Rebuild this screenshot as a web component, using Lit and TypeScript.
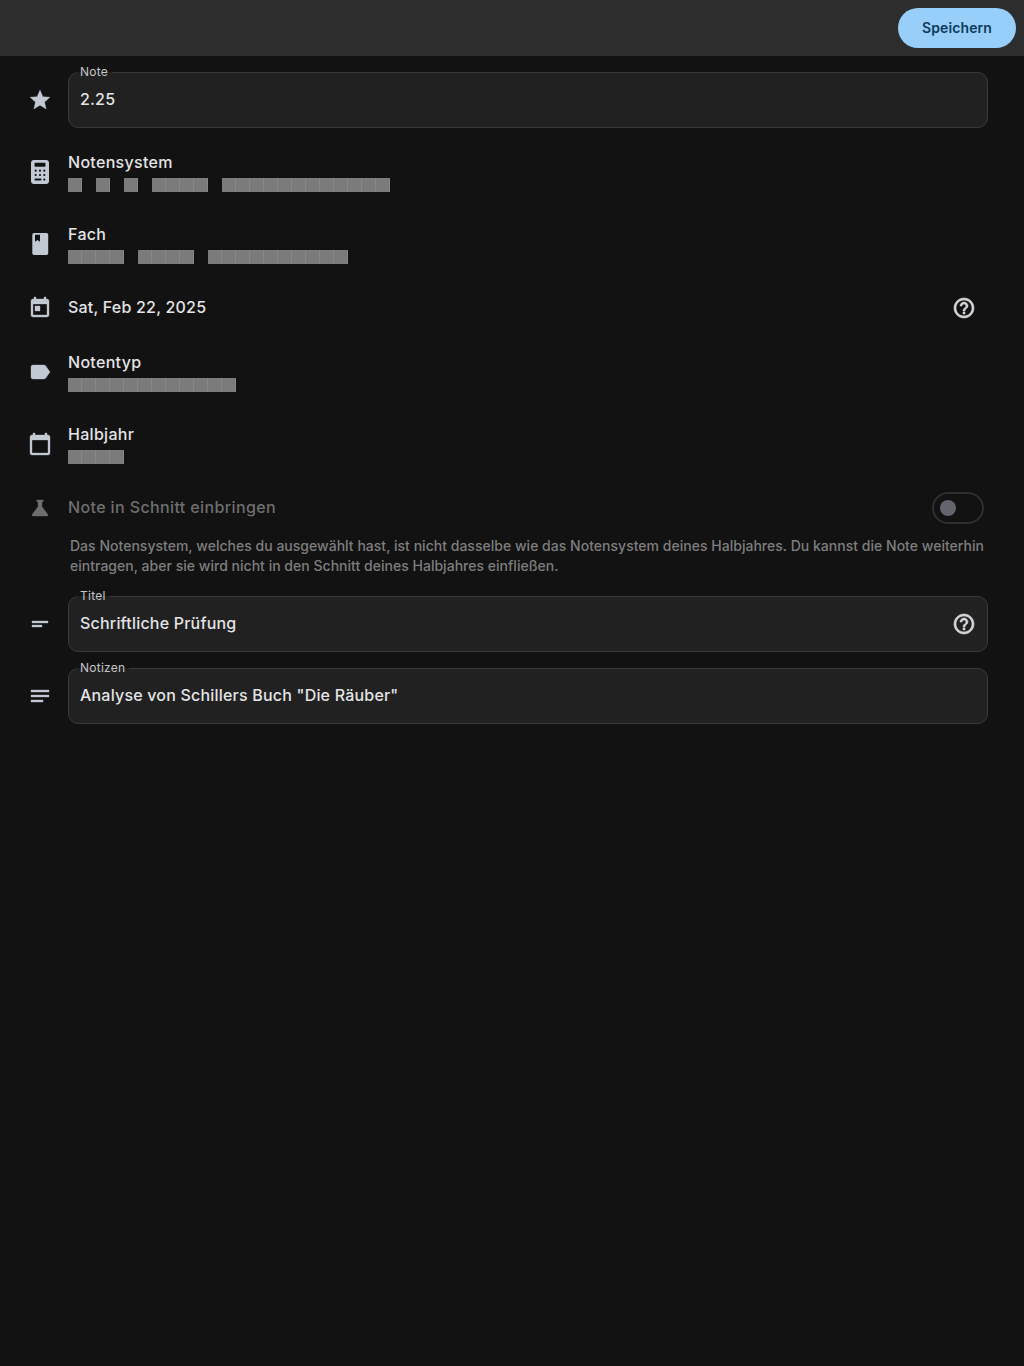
import { LitElement, css, html, svg } from "lit";
import { customElement } from "lit/decorators.js";

const dot = (x: number, y: number) =>
  `M${x - 1.1} ${y}a1.100 1.100 0 1 0 2.200 0a1.100 1.100 0 1 0-2.200 0z`;

const calcPath =
  "M6 0h12a3 3 0 0 1 3 3v18a3 3 0 0 1-3 3H6a3 3 0 0 1-3-3V3a3 3 0 0 1 3-3zM7.500 2.700a1 1 0 0 0-1 1v2a1 1 0 0 0 1 1h9a1 1 0 0 0 1-1v-2a1 1 0 0 0-1-1z" +
  [
    [7.7, 10.7],
    [12, 10.7],
    [16.3, 10.7],
    [7.7, 15],
    [12, 15],
    [16.3, 15],
    [16.3, 19.6],
  ]
    .map(([x, y]) => dot(x, y))
    .join("") +
  "M7.500 18.600a1 1 0 0 0 0 2h5a1 1 0 0 0 0-2z";

const icons: Record<string, ReturnType<typeof svg>> = {
  star: svg`<path d="M12 17.27L18.18 21l-1.64-7.03L22 9.24l-7.19-.61L12 2 9.19 8.63 2 9.24l5.46 4.73L5.82 21z"/>`,
  calc: svg`<path fill-rule="evenodd" d=${calcPath}/>`,
  book: svg`<path fill-rule="evenodd" d="M6 1h12.500A1.700 1.700 0 0 1 20.200 2.700v18.600a1.700 1.700 0 0 1-1.700 1.700H6a1.700 1.700 0 0 1-1.700-1.700V2.700A1.700 1.700 0 0 1 6 1zM7 2.800v7l2.500-1.700 2.500 1.700v-7z"/>`,
  today: svg`<path d="M19 3h-1V1h-2v2H8V1H6v2H5c-1.110 0-1.990.900-1.990 2L3 19c0 1.100.890 2 2 2h14c1.100 0 2-.900 2-2V5c0-1.100-.900-2-2-2zm0 16H5V8h14v11zM7 10h5v5H7z"/>`,
  label: svg`<path d="M17.630 5.840C17.270 5.330 16.670 5 16 5L5 5.010C3.900 5.010 3 5.900 3 7v10c0 1.100.900 1.990 2 1.990L16 19c.670 0 1.270-.330 1.630-.840L22 12l-4.370-6.160z"/>`,
  calendar: svg`<path d="M20 3h-1V1h-2v2H7V1H5v2H4c-1.100 0-2 .900-2 2v16c0 1.100.900 2 2 2h16c1.100 0 2-.900 2-2V5c0-1.100-.900-2-2-2zm0 18H4V8h16v13z"/>`,
  science: svg`<path d="M19.800 18.400L14 10.670V6.500l1.350-1.690c.260-.330.030-.810-.390-.810H9.040c-.420 0-.650.480-.390.810L10 6.500v4.170L4.200 18.400c-.490.660-.020 1.600.800 1.600h14c.820 0 1.290-.940.800-1.600z"/>`,
  short: svg`<path d="M4 9h16v2H4zm0 4h10v2H4z"/>`,
  notes: svg`<path d="M3 18h12v-2H3v2zM3 6v2h18V6H3zm0 7h18v-2H3v2z"/>`,
  help: svg`<path d="M11 18h2v-2h-2v2zm1-16C6.480 2 2 6.480 2 12s4.480 10 10 10 10-4.480 10-10S17.520 2 12 2zm0 18c-4.410 0-8-3.590-8-8s3.590-8 8-8 8 3.590 8 8-3.590 8-8 8zm0-14c-2.210 0-4 1.790-4 4h2c0-1.100.900-2 2-2s2 .900 2 2c0 2-3 1.750-3 5h2c0-2.250 3-2.500 3-5 0-2.210-1.790-4-4-4z"/>`,
};

@customElement("app-root")
export class AppRoot extends LitElement {
  static styles = css`
    :host {
      display: block;
      min-height: 1366px;
      background: #121212;
      color: #e4e4e6;
      font-family: Inter, "Liberation Sans", sans-serif;
      font-size: 16px;
      font-weight: 500;
      letter-spacing: 0.3px;
    }
    .topbar {
      height: 56px;
      box-sizing: border-box;
      background: #2d2d2d;
      display: flex;
      justify-content: flex-end;
      align-items: center;
      padding-right: 8px;
    }
    .save {
      width: 118px;
      height: 40px;
      box-sizing: border-box;
      padding-bottom: 1px;
      border-radius: 20px;
      background: #98cefa;
      color: #0b3a5a;
      display: flex;
      align-items: center;
      justify-content: center;
      font-size: 14px;
      font-weight: 600;
      letter-spacing: 0.1px;
    }
    .form {
      display: flex;
      flex-direction: column;
      padding-top: 16px;
    }
    .row {
      display: flex;
      align-items: center;
      padding: 0 36px 0 28px;
      gap: 16px;
    }
    .row.tall {
      height: 72px;
    }
    .row.short,
    .row.fieldrow {
      height: 56px;
    }
    .gap-8 {
      margin-bottom: 8px;
    }
    .gap-16 {
      margin-bottom: 16px;
    }
    svg.icon {
      width: 24px;
      height: 24px;
      flex: none;
      fill: #c2c9d3;
      stroke: #c2c9d3;
      stroke-width: 0.35;
      display: block;
    }
    svg.icon.solid {
      stroke: none;
    }
    svg.icon.dim {
      fill: #6e6e6e;
      stroke: #6e6e6e;
    }
    svg.icon.help {
      fill: #d4d6d9;
      stroke: #d4d6d9;
      stroke-width: 0.6;
    }
    .field {
      flex: 1;
      height: 56px;
      box-sizing: border-box;
      border: 1px solid #3a3a3a;
      border-radius: 10px;
      background: #212121;
      position: relative;
      display: flex;
      align-items: center;
      justify-content: space-between;
      padding: 0 11px;
    }
    .value {
      padding-bottom: 2px;
      letter-spacing: 0.2px;
    }
    .legend {
      position: absolute;
      top: -9px;
      left: 7px;
      padding: 0 4px;
      font-size: 12px;
      font-weight: 400;
      letter-spacing: 0.25px;
      line-height: 16px;
      color: #c4c6ca;
      background: linear-gradient(to bottom, #121212 50%, #212121 50%);
    }
    .grow {
      flex: 1;
      display: flex;
      flex-direction: column;
    }
    .title {
      line-height: 20px;
    }
    .sub {
      display: flex;
      gap: 14px;
      margin-top: 6px;
      height: 14px;
    }
    .sub i {
      display: block;
      height: 14px;
      background: repeating-linear-gradient(
        to right,
        #7b7b7b 0,
        #7b7b7b 13px,
        #868686 13px,
        #868686 14px
      );
    }
    .plain {
      flex: 1;
      display: flex;
      align-items: center;
      justify-content: space-between;
      padding-right: 12px;
    }
    .plain.toggle {
      padding-right: 4px;
    }
    .value.disabled {
      color: #6f6f6f;
      letter-spacing: 0.38px;
    }
    .switch {
      width: 52px;
      height: 32px;
      box-sizing: border-box;
      border: 2px solid #2f2f2f;
      border-radius: 16px;
      display: flex;
      align-items: center;
      padding-left: 6px;
    }
    .switch b {
      display: block;
      width: 16px;
      height: 16px;
      border-radius: 50%;
      background: #62656b;
    }
    .hint {
      margin: 0 30px 20px 70px;
      font-size: 14px;
      line-height: 20px;
      color: #7e7e7e;
      letter-spacing: 0.02px;
    }
  `;

  private icon(name: string, cls = "") {
    return html`<svg class="icon ${cls}" viewBox="0 0 24 24">${icons[name]}</svg>`;
  }

  private blocks(words: number[]) {
    return html`<div class="sub">
      ${words.map((n) => html`<i style="width:${n * 14}px"></i>`)}
    </div>`;
  }

  private selectRow(icon: string, title: string, words: number[], cls = "") {
    return html`<div class="row tall">
      ${this.icon(icon, cls)}
      <div class="grow">
        <div class="title">${title}</div>
        ${this.blocks(words)}
      </div>
    </div>`;
  }

  private field(icon: string, legend: string, value: string, help = false, cls = "gap-16") {
    return html`<div class="row fieldrow ${cls}">
      ${this.icon(icon)}
      <div class="field">
        <span class="legend">${legend}</span>
        <span class="value">${value}</span>
        ${help ? this.icon("help", "help") : ""}
      </div>
    </div>`;
  }

  render() {
    return html`
      <div class="topbar"><div class="save">Speichern</div></div>
      <div class="form">
        ${this.field("star", "Note", "2.25", false, "gap-8")}
        ${this.selectRow("calc", "Notensystem", [1, 1, 1, 4, 12], "solid")}
        ${this.selectRow("book", "Fach", [4, 4, 10], "solid")}
        <div class="row short">
          ${this.icon("today")}
          <div class="plain">
            <span class="value">Sat, Feb 22, 2025</span>
            ${this.icon("help", "help")}
          </div>
        </div>
        ${this.selectRow("label", "Notentyp", [12])}
        ${this.selectRow("calendar", "Halbjahr", [4])}
        <div class="row short">
          ${this.icon("science", "dim")}
          <div class="plain toggle">
            <span class="value disabled">Note in Schnitt einbringen</span>
            <div class="switch"><b></b></div>
          </div>
        </div>
        <p class="hint">
          Das Notensystem, welches du ausgewählt hast, ist nicht dasselbe wie das
          Notensystem deines Halbjahres. Du kannst die Note weiterhin<br />eintragen, aber
          sie wird nicht in den Schnitt deines Halbjahres einfließen.
        </p>
        ${this.field("short", "Titel", "Schriftliche Prüfung", true)}
        ${this.field("notes", "Notizen", 'Analyse von Schillers Buch "Die Räuber"')}
      </div>
    `;
  }
}
